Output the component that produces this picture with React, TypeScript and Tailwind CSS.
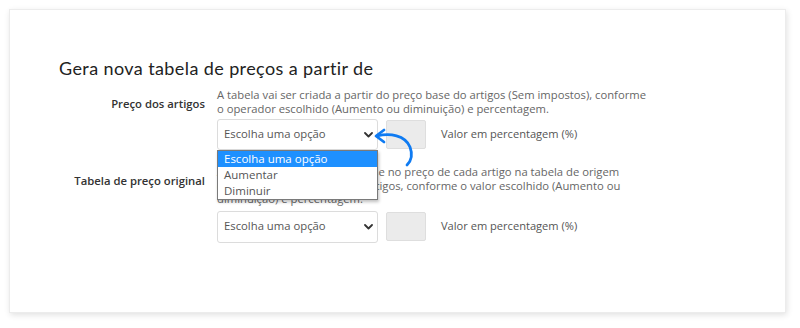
import React from "react";

const body = { fontFamily: '"Open Sans", "Liberation Sans", sans-serif' };

function Chevron() {
  return (
    <svg width="9" height="6" viewBox="0 0 9 6" className="block">
      <polyline points="1,1 4.5,4.5 8,1" fill="none" stroke="#333" strokeWidth="1.8" strokeLinecap="round" strokeLinejoin="round" />
    </svg>
  );
}

function SelectRow({ open, h }: { open?: boolean; h: string }) {
  return (
    <div className="flex items-center">
      <div className={`relative w-[161px] ${h} border border-[#dcdcdc] rounded-[3px] bg-white flex items-center justify-between pl-[6px] pr-[4px]`}>
        <span className="text-[11.3px] text-[#555]">Escolha uma opção</span>
        <Chevron />
        {open && (
          <div className="absolute left-[-1px] top-[calc(100%+1px)] w-[161px] bg-white border border-[#7a7a7a] shadow-[1px_2px_3px_rgba(0,0,0,0.25)] z-10 text-[11.5px] leading-[16px]">
            <div className="bg-[#1e90ff] text-white pl-[6px] h-[16px]">Escolha uma opção</div>
            <div className="text-[#555] pl-[6px] h-[16px]">Aumentar</div>
            <div className="text-[#555] pl-[6px] h-[16px]">Diminuir</div>
          </div>
        )}
      </div>
      <div className="ml-[8px] w-[40px] h-[29px] bg-[#ebebeb] border border-[#dedede] rounded-[2px]" />
      <span className="ml-[15px] text-[11.1px] text-[#555]">Valor em percentagem (%)</span>
    </div>
  );
}

export default function App() {
  return (
    <div className="w-[800px] h-[328px] bg-white p-[9px]" style={body}>
      <div className="relative w-[777px] h-[304px] bg-white border border-[#ececec] shadow-[1px_2px_6px_rgba(0,0,0,0.12)] pl-[49px] pt-[46px]">
        <h1 className="text-[18px] leading-[24px] text-[#222] font-normal tracking-[0.4px]" style={{ fontFamily: '"Lato", "Open Sans", sans-serif' }}>
          Gera nova tabela de preços a partir de
        </h1>
        <div className="grid grid-cols-[146px_1fr] gap-x-[12px] mt-[8px]">
          <div className="text-right pt-[8px] text-[11.3px] leading-[16px] font-semibold text-[#333]">Preço dos artigos</div>
          <div>
            <p className="text-[11.25px] leading-[13.5px] text-[#666]">
              A tabela vai ser criada a partir do preço base do artigos (Sem impostos), conforme
              <br />o operador escolhido (Aumento ou diminuição) e percentagem.
            </p>
            <div className="mt-[4px]">
              <SelectRow open h="h-[31px]" />
            </div>
          </div>
          <div className="text-right pt-[8px] mt-[15px] text-[11.3px] leading-[16px] font-semibold text-[#333]">Tabela de preço original</div>
          <div className="mt-[15px]">
            <p className="text-[11.25px] leading-[13.5px] text-[#666]">
              A tabela vai ser criada com base no preço de cada artigo na tabela de origem
              <br />(Sem impostos) de todos os artigos, conforme o valor escolhido (Aumento ou
              <br />diminuição) e percentagem.
            </p>
            <div className="mt-[5px]">
              <SelectRow h="h-[32px]" />
            </div>
          </div>
        </div>
        <svg className="absolute left-[350px] top-[105px] z-20" width="60" height="60" viewBox="0 0 60 60">
          <path d="M17 21 C 30 18, 45 20, 50 32 C 53 40, 51 46, 47 50" fill="none" stroke="#0f7bf2" strokeWidth="2.8" strokeLinecap="round" />
          <path d="M24 15 L16 21 L24 27" fill="none" stroke="#0f7bf2" strokeWidth="2.8" strokeLinecap="round" strokeLinejoin="round" />
        </svg>
      </div>
    </div>
  );
}
